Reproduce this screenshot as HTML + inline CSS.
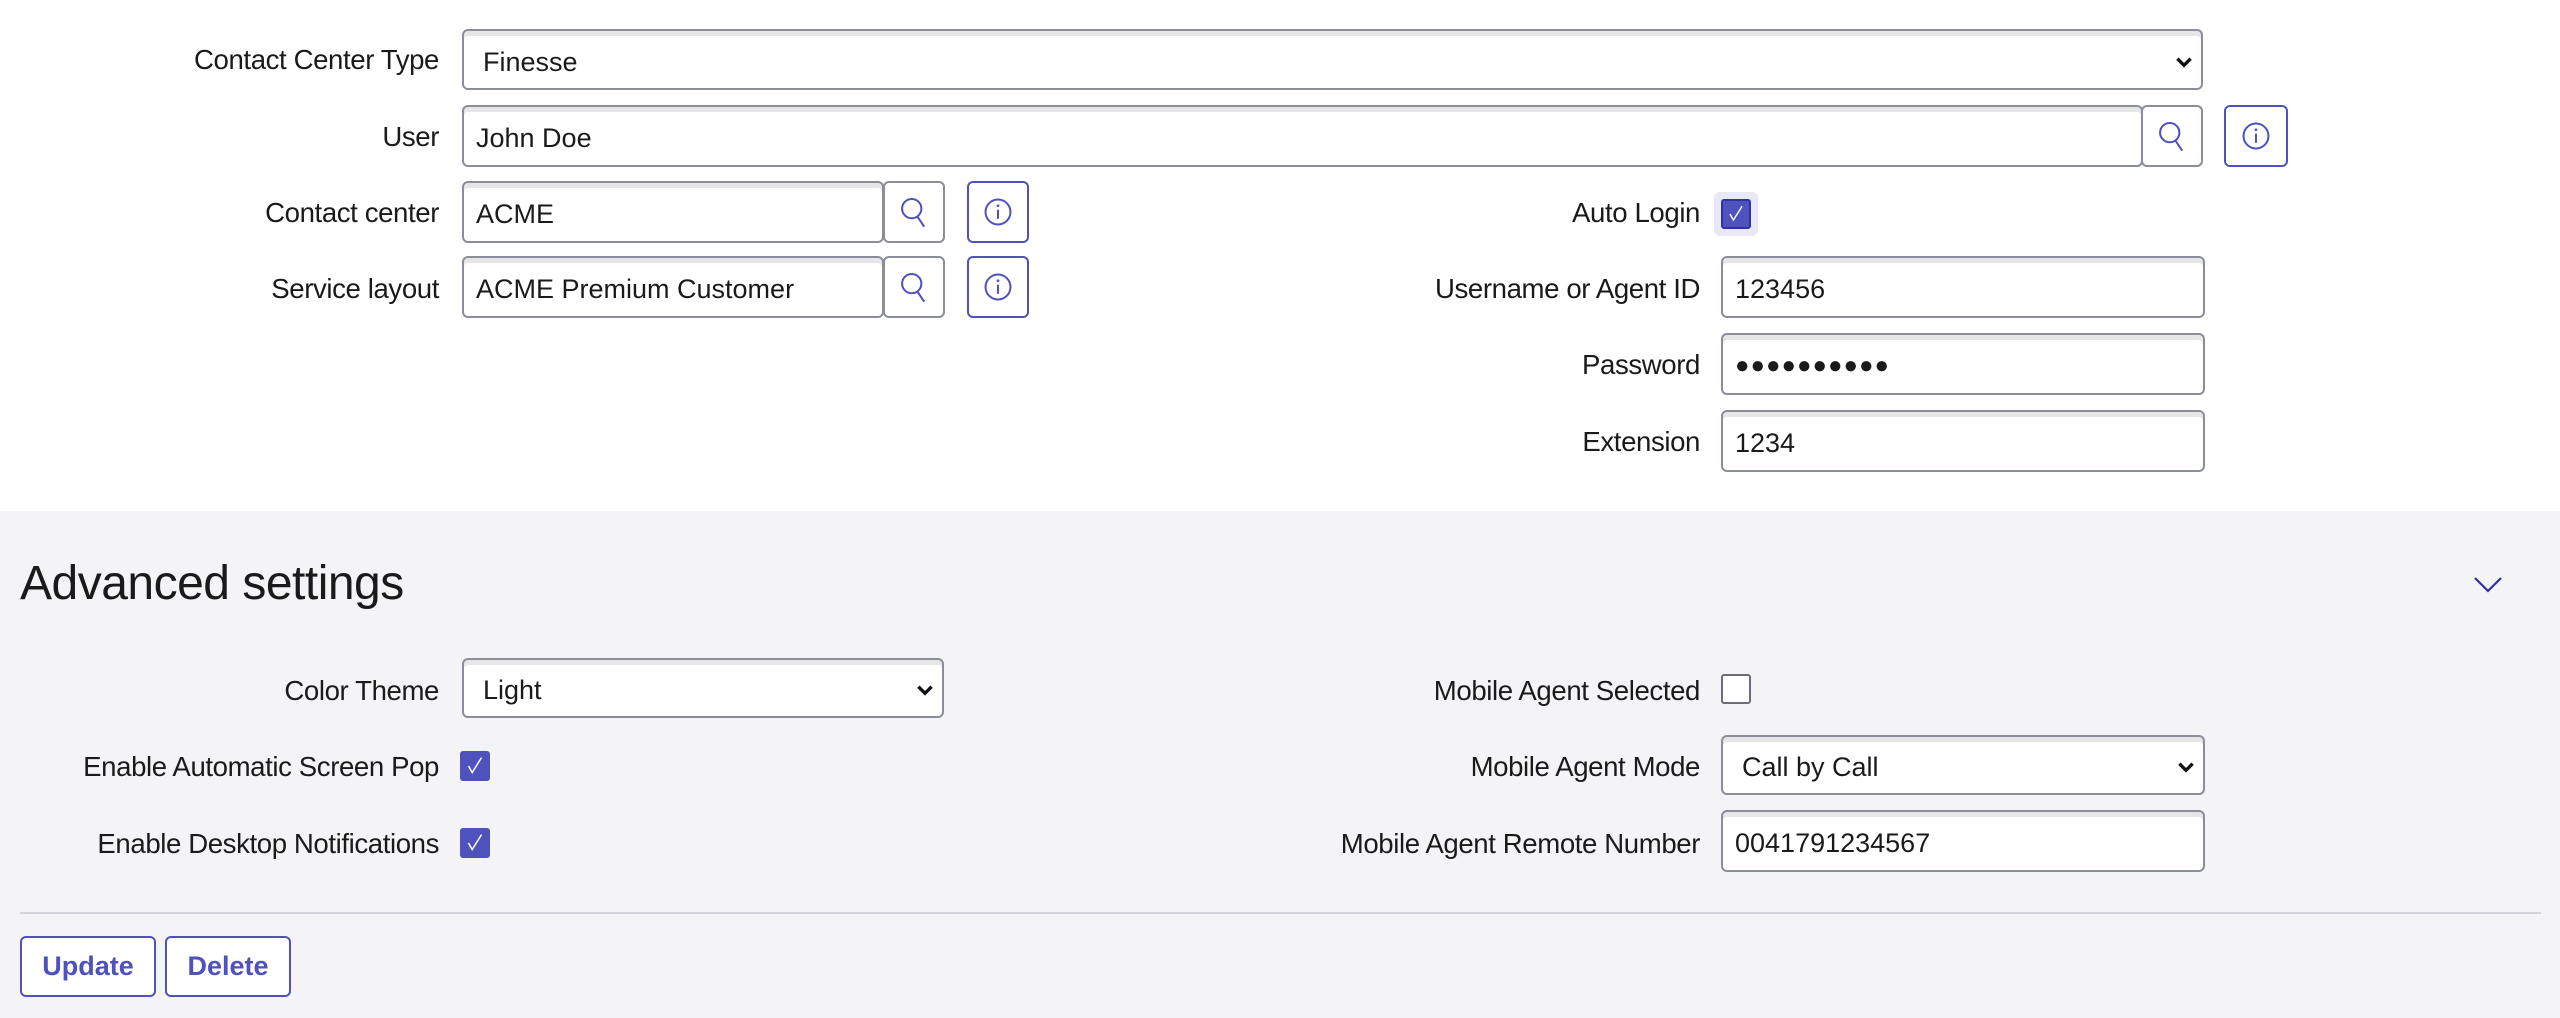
<!DOCTYPE html>
<html><head><meta charset="utf-8"><style>
*{box-sizing:border-box;margin:0;padding:0}
body{width:2560px;height:1018px;background:#fff;font-family:"Liberation Sans",sans-serif;color:#1a1a1a;position:relative;overflow:hidden}
.a{position:absolute}
.lbl{position:absolute;font-size:27.6px;text-align:right;line-height:30px;letter-spacing:-0.4px;margin-top:1px}
.inp{position:absolute;background:#fff;border:2px solid #8b8e9a;border-radius:6px;box-shadow:inset 0 5px 0 #e6e6e6;font-size:27px;line-height:30px;padding:0 0 0 12px;display:flex;align-items:center;padding-top:4px}
.sel{padding-left:19px}
.btn{position:absolute;border:2px solid #8b8e9a;border-radius:6px;background:#fff;display:flex;align-items:center;justify-content:center}
.ibtn{border-color:#4f52bd}
.cb{position:absolute;width:30px;height:30px;border-radius:3px;background:#4f52bd;display:flex;align-items:center;justify-content:center}
.gray{position:absolute;left:0;top:511px;width:2560px;height:507px;background:#f4f4f6}
.pb{position:absolute;border:2px solid #4f52bd;border-radius:6px;background:#fff;color:#4f52bd;font-size:27px;font-weight:bold;display:flex;align-items:center;justify-content:center}
.chev{position:absolute;right:6px}
</style></head><body>
<svg width="0" height="0" style="position:absolute"><defs>
<symbol id="srch" viewBox="0 0 30 30"><circle cx="13" cy="12" r="8.5" fill="none" stroke="#4f52bd" stroke-width="1.8"/><line x1="18" y1="19" x2="24" y2="28" stroke="#4f52bd" stroke-width="1.8"/></symbol>
<symbol id="info" viewBox="0 0 30 30"><circle cx="15" cy="15" r="11" fill="none" stroke="#4f52bd" stroke-width="1.8"/><line x1="15" y1="13" x2="15" y2="21" stroke="#4f52bd" stroke-width="1.8"/><circle cx="15" cy="9.5" r="1.2" fill="#4f52bd"/></symbol>
<symbol id="dd" viewBox="0 0 20 20"><path d="M4 7 L10 13 L16 7" fill="none" stroke="#111" stroke-width="3"/></symbol>
<symbol id="ck" viewBox="0 0 30 30"><path d="M8 15 L12 22 L22 6" fill="none" stroke="#fff" stroke-width="1.6"/></symbol>
</defs></svg>

<div class="lbl" style="right:2121px;top:44px">Contact Center Type</div>
<div class="inp sel" style="left:462px;top:29px;width:1741px;height:61px">Finesse<svg class="chev" width="22" height="22"><use href="#dd"/></svg></div>

<div class="lbl" style="right:2121px;top:121px">User</div>
<div class="inp" style="left:462px;top:105px;width:1681px;height:62px">John Doe</div>
<div class="btn" style="left:2141px;top:105px;width:62px;height:62px"><svg width="34" height="34"><use href="#srch"/></svg></div>
<div class="btn ibtn" style="left:2224px;top:105px;width:64px;height:62px"><svg width="34" height="34"><use href="#info"/></svg></div>

<div class="lbl" style="right:2121px;top:197px">Contact center</div>
<div class="inp" style="left:462px;top:181px;width:422px;height:62px">ACME</div>
<div class="btn" style="left:883px;top:181px;width:62px;height:62px"><svg width="34" height="34"><use href="#srch"/></svg></div>
<div class="btn ibtn" style="left:967px;top:181px;width:62px;height:62px"><svg width="34" height="34"><use href="#info"/></svg></div>

<div class="lbl" style="right:2121px;top:273px">Service layout</div>
<div class="inp" style="left:462px;top:256px;width:422px;height:62px">ACME Premium Customer</div>
<div class="btn" style="left:883px;top:256px;width:62px;height:62px"><svg width="34" height="34"><use href="#srch"/></svg></div>
<div class="btn ibtn" style="left:967px;top:256px;width:62px;height:62px"><svg width="34" height="34"><use href="#info"/></svg></div>

<div class="lbl" style="right:860px;top:197px">Auto Login</div>
<div class="a" style="left:1714px;top:192px;width:44px;height:44px;border-radius:6px;background:#e8e8f6"></div>
<div class="cb" style="left:1721px;top:199px;border:2px solid #2f32a0"><svg width="28" height="28"><use href="#ck"/></svg></div>

<div class="lbl" style="right:860px;top:273px">Username or Agent ID</div>
<div class="inp" style="left:1721px;top:256px;width:484px;height:62px">123456</div>
<div class="lbl" style="right:860px;top:349px">Password</div>
<div class="inp" style="left:1721px;top:333px;width:484px;height:62px;letter-spacing:1px;font-size:24px">●●●●●●●●●●</div>
<div class="lbl" style="right:860px;top:426px">Extension</div>
<div class="inp" style="left:1721px;top:410px;width:484px;height:62px">1234</div>

<div class="gray"></div>
<div class="a" style="left:20px;top:555px;font-size:48px;line-height:58px;letter-spacing:-0.5px">Advanced settings</div>
<svg class="a" style="left:2472px;top:570px" width="32" height="28"><path d="M3 8 L16 21 L29 8" fill="none" stroke="#2f32a0" stroke-width="2.2"/></svg>

<div class="lbl" style="right:2121px;top:675px">Color Theme</div>
<div class="inp sel" style="left:462px;top:658px;width:482px;height:60px">Light<svg class="chev" width="22" height="22"><use href="#dd"/></svg></div>
<div class="lbl" style="right:2121px;top:751px">Enable Automatic Screen Pop</div>
<div class="cb" style="left:460px;top:751px"><svg width="28" height="28"><use href="#ck"/></svg></div>
<div class="lbl" style="right:2121px;top:828px">Enable Desktop Notifications</div>
<div class="cb" style="left:460px;top:828px"><svg width="28" height="28"><use href="#ck"/></svg></div>

<div class="lbl" style="right:860px;top:675px">Mobile Agent Selected</div>
<div class="a" style="left:1721px;top:674px;width:30px;height:30px;border:2px solid #6b6e7a;border-radius:3px;background:#fff"></div>
<div class="lbl" style="right:860px;top:751px">Mobile Agent Mode</div>
<div class="inp sel" style="left:1721px;top:735px;width:484px;height:60px">Call by Call<svg class="chev" width="22" height="22"><use href="#dd"/></svg></div>
<div class="lbl" style="right:860px;top:828px">Mobile Agent Remote Number</div>
<div class="inp" style="left:1721px;top:810px;width:484px;height:62px">0041791234567</div>

<div class="a" style="left:20px;top:912px;width:2521px;height:2px;background:#d3d5db"></div>
<div class="pb" style="left:20px;top:936px;width:136px;height:61px">Update</div>
<div class="pb" style="left:165px;top:936px;width:126px;height:61px">Delete</div>
</body></html>
